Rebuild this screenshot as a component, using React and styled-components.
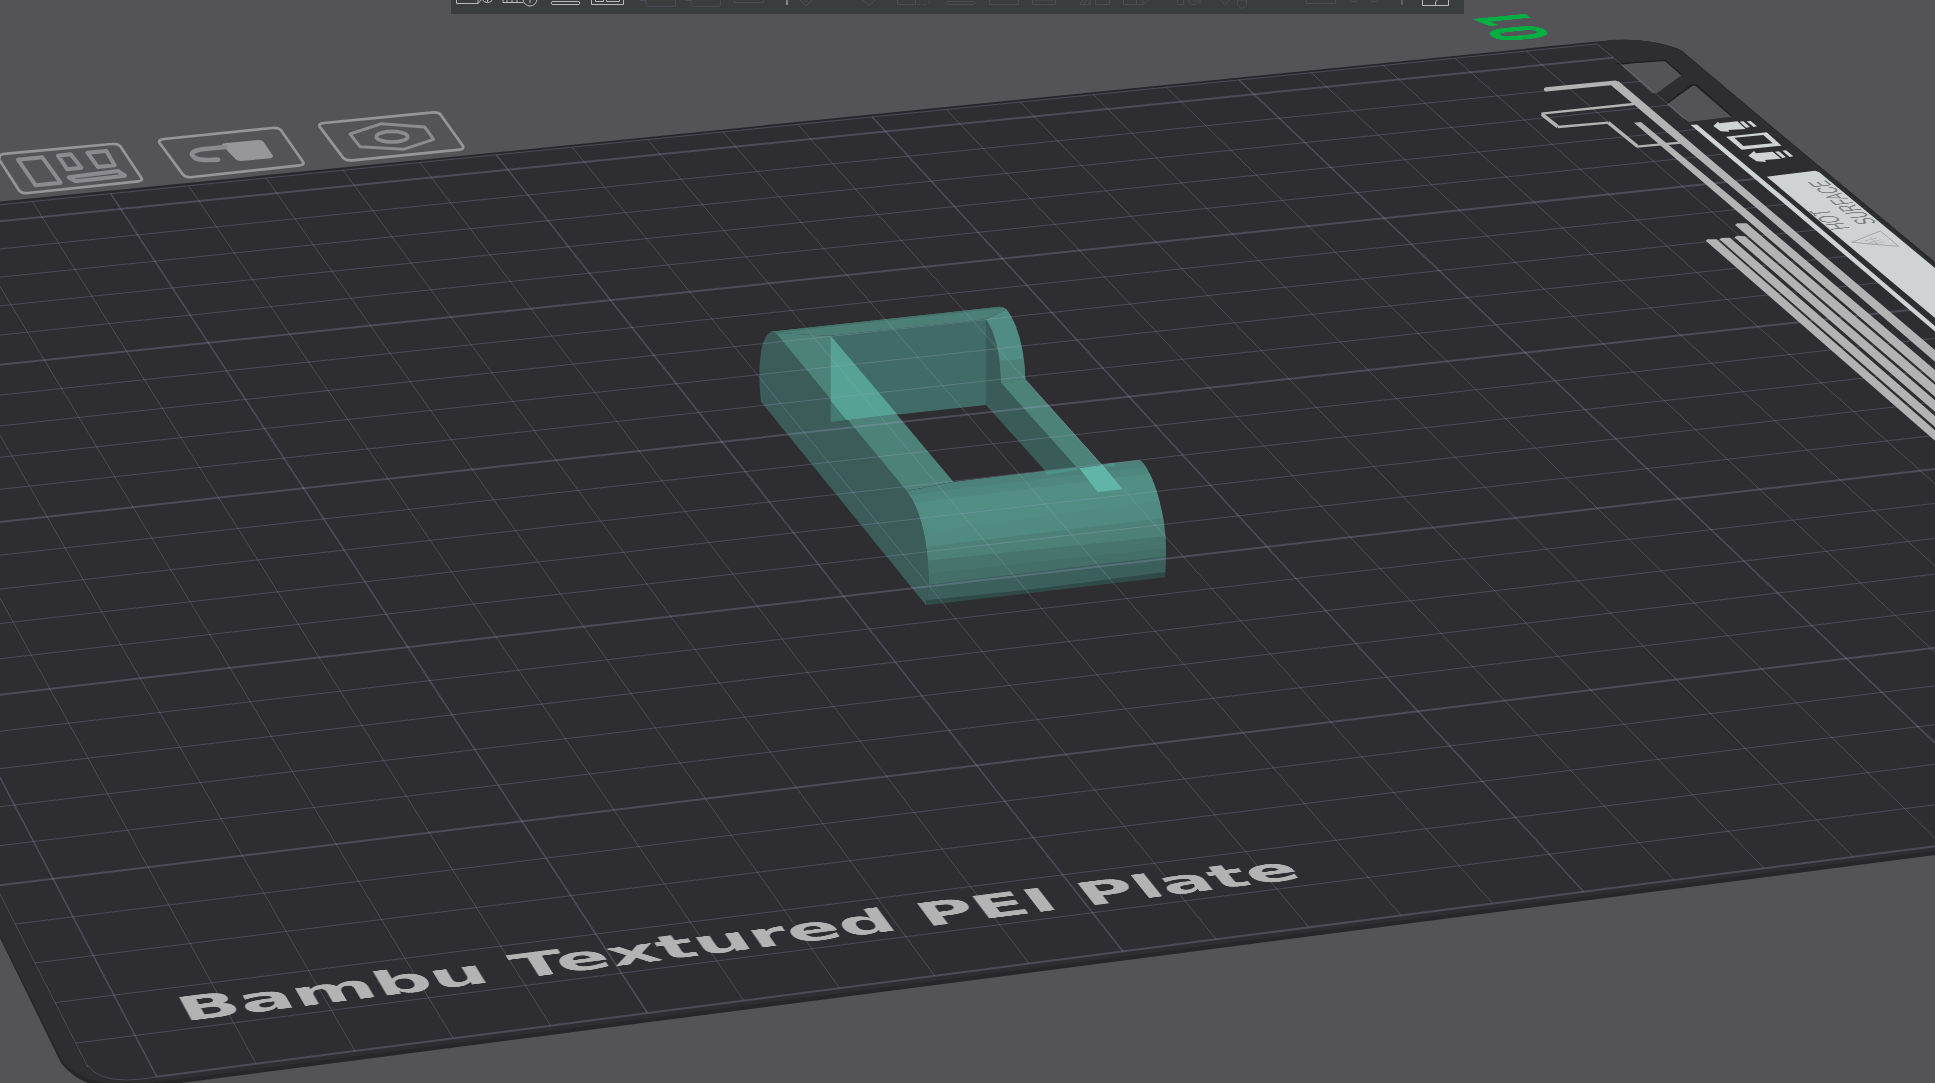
import React, { useEffect, useState } from "react";
import styled, { createGlobalStyle } from "styled-components";

const VIEW_W = 1935;
const VIEW_H = 1083;

/* ---------- camera ---------- */

// Known bed coordinates (in 10 mm cells) and where the camera puts them.
const ANCHORS = [
  [0, 0, 156.7, 1076.7],
  [15, 0, 1583.7, 891.7],
  [25, 25, 1613.5, 57.8],
  [5, 25, 120.7, 209],
];

function solve(rows) {
  const n = rows.length;
  for (let c = 0; c < n; c++) {
    let p = c;
    for (let r = c + 1; r < n; r++) if (Math.abs(rows[r][c]) > Math.abs(rows[p][c])) p = r;
    [rows[c], rows[p]] = [rows[p], rows[c]];
    for (let r = 0; r < n; r++) {
      if (r === c) continue;
      const f = rows[r][c] / rows[c][c];
      for (let k = c; k <= n; k++) rows[r][k] -= f * rows[c][k];
    }
  }
  return rows.map((row, i) => row[n] / row[i]);
}

function homography(points) {
  const rows = [];
  points.forEach(([u, v, x, y]) => {
    rows.push([u, v, 1, 0, 0, 0, -u * x, -v * x, x]);
    rows.push([0, 0, 0, u, v, 1, -u * y, -v * y, y]);
  });
  return solve(rows);
}

const H = homography(ANCHORS);

function project(u, v) {
  const w = H[6] * u + H[7] * v + 1;
  return [(H[0] * u + H[1] * v + H[2]) / w, (H[3] * u + H[4] * v + H[5]) / w];
}

// The lettering plane has 100 px per cell, with its y axis pointing to the front.
const CELL = 100;
const DEPTH = 28;
const P = homography(
  [[0, 0], [20, 0], [20, 20], [0, 20]].map(([u, v]) => [u * CELL, (DEPTH - v) * CELL, ...project(u, v)])
);
const PLANE_MATRIX = `matrix3d(${[
  P[0], P[3], 0, P[6],
  P[1], P[4], 0, P[7],
  0, 0, 1, 0,
  P[2], P[5], 0, 1,
].map((n) => n.toFixed(12)).join(",")})`;

/* ---------- styles ---------- */

const GlobalStyle = createGlobalStyle`
  * { box-sizing: border-box; }
  html, body, #root { height: 100%; }
  body { margin: 0; background: #545358; overflow: hidden; font-family: "Open Sans", sans-serif; }
`;

const Viewport = styled.main`
  position: relative;
  min-height: 100vh;
  overflow: hidden;
  background: #545358;
`;

const Scene = styled.svg`
  position: absolute;
  inset: 0;
  width: 100%;
  height: 100%;
  display: block;
`;

const Lettering = styled.div`
  position: absolute;
  top: 0;
  left: 0;
  width: 2700px;
  height: 2800px;
  transform-origin: 0 0;
  pointer-events: none;
`;

const PlateName = styled.h1`
  position: absolute;
  left: 54px;
  top: 2604px;
  margin: 0;
  font: 700 81px/100px "DejaVu Sans", sans-serif;
  color: #b3b3b3;
  white-space: nowrap;
`;

const Upright = styled.span`
  position: absolute;
  left: ${(p) => p.$x}px;
  top: ${(p) => p.$y}px;
  transform: translate(-50%, -50%) rotate(-90deg);
  white-space: nowrap;
`;

const PlateNumber = styled(Upright)`
  font: 900 106px/120px Roboto, sans-serif;
  color: #00ae42;
`;

const Warning = styled(Upright)`
  font: 400 36px/40px "Liberation Sans", sans-serif;
  color: #7d8183;
`;

const ToolbarRow = styled.header`
  position: relative;
  display: flex;
  justify-content: center;
  padding-right: 20px;
`;

const Toolbar = styled.div`
  display: flex;
  height: 14px;
  padding: 0 13px 0 7px;
  overflow: hidden;
  background: #3a3d3e;
`;

const Tool = styled.button`
  width: 32px;
  height: 14px;
  margin: 0 0 0 ${(p) => p.$gap}px;
  padding: 0;
  border: 0;
  background: none;
  color: ${(p) => (p.disabled ? "#4c4c54" : "#b9babd")};
`;

const ToolIcon = styled.svg`
  display: block;
  overflow: visible;
  fill: none;
  stroke: currentColor;
  stroke-width: 1;
`;

const Divider = styled.span`
  width: 2px;
  height: 5px;
  margin-left: ${(p) => p.$gap}px;
  background: ${(p) => (p.$bright ? "#85868a" : "#5e5f64")};
`;

/* ---------- toolbar ---------- */

const TOOLS = [
  { name: "Add", gap: 0, on: true, d: "M-1.5-4V3.5H20L24-1M20 3.5V-2M24-1A6 6 0 0 0 35-1M29.500-2V2" },
  { name: "Add plate", gap: 14, on: true, d: "M-1-4V2.500H19M3-1V2M8-1V2M13-1V2M-1-.5H18M19-1A7 7 0 0 0 33-1M26-3V3" },
  { name: "Auto orient", gap: 14, on: true, d: "M2 1.500H29Q31 3 29 4.500H2Q0 3 2 1.500Z" },
  { name: "Arrange", gap: 10, on: true, d: "M-.5-4V4.500H31.500V-4M3.500-4V1.500H11.500V-4M14.500-4V1.500H27.500V-4" },
  { name: "Copy", gap: 20, d: "M-4 .5H2V4Q2 6.500 5 6.500H29Q31.500 6.500 31.500 4V-3M2 .5V-3" },
  { name: "Paste", gap: 13, d: "M-4 .5H2V4Q2 6.500 5 6.500H29Q31.500 6.500 31.500 4V-3M2 .5V-3" },
  { name: "Delete", gap: 12, d: "M1.500-4V2.500H30.500V-4" },
  { divider: true, gap: 21, bright: true },
  { name: "Undo", gap: 2, d: "M10 0L16 6L22 0M13-1L16 2L19-1" },
  { name: "Redo", gap: 31, d: "M10 0L16 5.500L22 0" },
  { name: "Split", gap: 12, d: "M.5-4V4.500H18.500V-4M20 4.500h3m3 0h3m3-4v3" },
  { name: "Layers", gap: 15, d: "M3 1.500H30Q33 3 30 4.500H3Q0 3 3 1.500Z" },
  { name: "Move", gap: 12, d: "M1.500-4V4.500H30.500V-4" },
  { name: "Rotate", gap: 8, d: "M4.500-4V4.500H27.500V-4M4 0H27" },
  { name: "Cut", gap: 19, d: "M1 4.500H11L12-3M1 4L6-2M5 4L9-2M9 4L12 0M16.500-4V4.500H30.500V-4" },
  { name: "Mirror", gap: 10, d: "M2.500-4V4.500H23L28-1M15.500-3V4M22 4V-2" },
  { name: "Text", gap: 20, d: "M4.500-4V4.500H10.500V-4M16-2Q15 5 21 4.500Q27 4 26-2M21-2A2 2 0 1 0 24 0M27 4V-2" },
  { name: "Paint", gap: 13, d: "M2-1L7 4.500L13-1M19.500 0V3Q20 8 24 8Q28 8 28.500 3V0Z" },
  { name: "Measure", gap: 55, d: "M1.500-4V3.500H30.500V-4" },
  { name: "Assemble", gap: 12, d: "M1-1A5 5 0 0 0 10-1M3-2L8 3M21-1A5 5 0 0 0 30-1M22 3L28-2" },
  { divider: true, gap: 20 },
  { name: "Assembly view", gap: 16, on: true, d: "M3.500-4V5.500H29.500V-4M16.500 5V2L19-1" },
];

function MainToolbar() {
  return (
    <ToolbarRow>
      <Toolbar role="toolbar" aria-label="Main toolbar">
        {TOOLS.map((t, i) =>
          t.divider ? (
            <Divider key={i} $gap={t.gap} $bright={t.bright} />
          ) : (
            <Tool key={i} $gap={t.gap} disabled={!t.on} aria-label={t.name}>
              <ToolIcon width="32" height="14" viewBox="0 0 32 14" aria-hidden="true">
                <path d={t.d} />
              </ToolIcon>
            </Tool>
          )
        )}
      </Toolbar>
    </ToolbarRow>
  );
}

/* ---------- build plate ---------- */

const EDGE = 25.6;

function BedLine({ from, to, bold, row }) {
  const [x1, y1] = project(...from);
  const [x2, y2] = project(...to);
  return <line x1={x1} y1={y1} x2={x2} y2={y2} strokeWidth={bold ? (row ? 2 : 1.6) : 1} />;
}

function Grid() {
  const steps = Array.from({ length: 26 }, (_, i) => i);
  return (
    <g stroke="#b0acd4" strokeOpacity="0.24" fill="none">
      {steps.map((u) => (
        <BedLine key={`c${u}`} from={[u, 0]} to={[u, EDGE]} bold={u % 5 === 0 && u < 25} />
      ))}
      {steps.map((v) => (
        <BedLine key={`r${v}`} from={[v === 0 ? 0 : -0.6, v]} to={[25, v]} bold={v % 5 === 0} row />
      ))}
      <BedLine from={[-0.6, EDGE]} to={[25, EDGE]} />
      <BedLine from={[-0.6, 0.42]} to={[-0.6, EDGE]} />
      <path d="M87.500 1065Q97 1080 127 1080Q142 1079.500 157 1077" />
    </g>
  );
}

function Plate() {
  return (
    <g>
      <path
        fill="#27262a"
        d="M0 201.500L480 154L1597 41.500Q1650 36 1681 50L1800 150L1935 262V855L150 1087H100Q75 1081 61 1063L0 938Z"
      />
      <path
        fill="#2e2d31"
        d="M0 203L480 155.500L1597 43L1610 40Q1650 37 1680 50.500L1799 150L1935 264V851L150 1083H105Q77 1078 63 1062L0 936Z"
      />
      <g transform="translate(1600 30) scale(0.33333)">
        <path fill="#545358" d="M60 102L195 91L245 136L170 190L155 188ZM282 165L395 260L270 275L245 262L200 222Z" />
        <path
          fill="none"
          stroke="#1f1e21"
          strokeWidth="4"
          d="M50 100L62 102L110 97L195 91L245 134M200 221L275 165H290L395 258"
        />
      </g>
    </g>
  );
}

function PlateMarks() {
  return (
    <g>
      <g fill="#b3b3b3">
        <path d="M1610.700 85L1618.300 81L1758.300 200L1935 350V361.700L1747.300 200Z" />
        <path d="M1634 122.700L1641 122L1735 200L1935 370V382L1724 200Z" />
        <g transform="translate(1500 200) scale(0.33333)">
          <path d="M705 75L712 70H740L1305 554V590Z" />
          <path d="M703 112L712 107L735 109L1305 601V635Z" />
          <path d="M658 118L664 114L690 113L1305 648V681Z" />
          <path d="M617 122L622 118H650L1305 691V722Z" />
        </g>
      </g>
      <g transform="translate(1440 0) scale(0.33333)" fill="none" stroke="#b3b3b3" strokeLinejoin="round">
        <path strokeWidth="13" strokeLinecap="round" d="M318 268L526 248" />
        <path strokeWidth="7" d="M582 312L304 341" />
        <path strokeWidth="11" d="M306 343L353 380" />
        <path strokeWidth="7" d="M353 381L505 368M590 440L722 428" />
        <path strokeWidth="10" d="M505 368L592 439" />
      </g>
      <g fill="#cfd3d4">
        <path d="M1690.700 125L1697 124.500L1787.300 200L1935 326V331.500L1780 200Z" />
        <path d="M1766.700 176.700L1815 170.700L1819 172L1935 268V318Z" />
        <g transform="translate(1600 30) scale(0.33333)">
          <path d="M340 288L354 275L358 280L412 274L437 297L385 300L388 305L362 304Z" />
          <path d="M419 275L430 274L450 291L438 293ZM440 274L452 273L471 289L461 291Z" />
          <path fillRule="evenodd" d="M378 320L500 307L545 347L425 359ZM403 323L490 315L518 340L430 348Z" />
          <path d="M445 377L462 363L468 370L518 365L543 386L495 390L498 396L470 394Z" />
          <path d="M525 365L537 364L558 382L547 384ZM547 362L558 361L580 379L569 381Z" />
        </g>
      </g>
      <g transform="translate(1735 150) scale(0.33333)" fill="none" stroke="#9a9ea0" strokeWidth="2.500">
        <path d="M350 277L436 243L491 289Z" />
        <path strokeWidth="1.500" d="M390 272L425 264M398 280L440 268M410 284L448 274M405 262L430 284" />
      </g>
    </g>
  );
}

function PlateIcons() {
  return (
    <g
      transform="translate(0 90) scale(0.33333)"
      fill="none"
      stroke="#8c8b91"
      strokeWidth="12"
      strokeLinejoin="round"
      strokeLinecap="round"
    >
      <g strokeWidth="8" stroke="#96959a">
        <path d="M0 196Q4 192 20 191L335 162Q352 160 361 169L424 263Q430 272 414 274L84 309Q66 311 57 301L-3 208Z" />
        <path d="M492 147L815 114Q836 112 843 121L909 215Q915 224 899 226L578 261Q558 264 549 254L479 159Q472 150 492 147Z" />
        <path d="M972 99L1292 68Q1315 65 1322 74L1389 168Q1394 177 1379 179L1058 211Q1038 213 1029 203L959 110Q953 101 972 99Z" />
      </g>
      <path d="M54 209L127 202L182 278L107 286Z" />
      <path d="M174 197L212 193L244 233L202 238ZM262 188L319 183L344 226L294 231Z" />
      <path d="M206 262L354 243L375 257L227 274Z" />
      <path fill="#97969b" stroke="none" d="M665 164Q668 160 680 159L775 150Q787 150 791 156L819 197Q820 203 812 205L722 213Q711 213 707 208Z" />
      <path strokeWidth="14" d="M676 171L612 177Q560 184 583 202Q597 213 654 209" />
      <path strokeWidth="9" d="M1145 101L1274 111L1301 148L1210 178L1080 170L1050 132Z" />
      <ellipse cx="1176" cy="140" rx="47" ry="16" strokeWidth="11" />
    </g>
  );
}

/* ---------- model ---------- */

const FRONT_OUTLINE =
  "M500 603L640 575L1197 510Q1206 512 1215 526Q1250 580 1268 675Q1284 760 1275 862L558 946L566 885Q565 690 500 603Z";

const FRONT_BANDS = [
  { fill: "#4b8178", pts: "490,600 640,575 1197,508 1300,498 1300,530 500,625" },
  { fill: "#4e877d", pts: "490,618 640,598 1300,521 1300,565 490,646" },
  { fill: "#528e84", pts: "490,642 1300,542 1300,605 490,694" },
  { fill: "#518d83", pts: "490,690 1300,588 1300,635 490,740" },
  { fill: "#508a81", pts: "490,736 1300,627 1300,690 490,783" },
  { fill: "#4d8178", pts: "490,779 1300,681 1300,750 490,822" },
  { fill: "#47756e", pts: "490,819 1300,736 1300,800 490,864" },
  { fill: "#446f69", pts: "490,858 1300,772 1300,797 490,895" },
  { fill: "#3b5f5b", pts: "490,893 1300,796 1300,848 490,945" },
  { fill: "#304a48", pts: "558,931 900,895 1300,843 1300,870 550,950" },
];

function Model() {
  return (
    <g transform="translate(740 290) scale(0.33333)">
      <clipPath id="front">
        <path d={FRONT_OUTLINE} />
      </clipPath>
      <path fill="#3b5c59" d="M112 130L92 125Q72 135 63 185Q53 250 63 335L558 946L566 885Q565 690 500 603Z" />
      <polygon fill="#416b66" points="272,137 738,88 738,345 272,395" />
      <path fill="#4c7f76" d="M92 125L780 50Q792 50 800 58L738 88L272 137L112 130Z" />
      <path fill="#467269" d="M92 125L780 50L788 54L108 128Z" />
      <polygon fill="#4d8278" points="108,129 272,137 640,575 500,603" />
      <polygon fill="#56a294" points="272,138 471,372 318,390 272,333" />
      <polygon fill="#447a70" points="272,333 318,390 272,395" />
      <path fill="#3a5c59" d="M738 88L800 120L790 280L1022 535L1018 548L925 553L738 345Z" />
      <path fill="#508c83" d="M738 88L800 58Q852 130 856 268L784 279Q780 150 738 88Z" />
      <path fill="#4c8077" d="M779 212L851 207L856 268L784 279Z" />
      <polygon fill="#4d8278" points="784,279 856,268 1090,528 1022,545" />
      <g clipPath="url(#front)">
        {FRONT_BANDS.map((b) => (
          <polygon key={b.pts} fill={b.fill} points={b.pts} />
        ))}
      </g>
      <polygon fill="#4b9588" points="915,545 1010,534 1014,540 922,554" />
      <polygon fill="#4b9588" points="1090,530 1105,521 1125,519 1125,529" />
      <polygon fill="#60b5a8" points="1018,535 1088,525 1147,598 1073,606" />
    </g>
  );
}

/* ---------- page ---------- */

const coverScale = () => Math.max(window.innerWidth / VIEW_W, window.innerHeight / VIEW_H);

function useCoverScale() {
  const [scale, setScale] = useState(coverScale);
  useEffect(() => {
    const update = () => setScale(coverScale());
    window.addEventListener("resize", update);
    return () => window.removeEventListener("resize", update);
  }, []);
  return scale;
}

export default function App() {
  const scale = useCoverScale();
  return (
    <Viewport>
      <GlobalStyle />
      <Scene viewBox={`0 0 ${VIEW_W} ${VIEW_H}`} preserveAspectRatio="xMinYMin slice" aria-hidden="true">
        <Plate />
        <PlateIcons />
        <Model />
        <Grid />
        <PlateMarks />
      </Scene>
      <Lettering style={{ transform: `scale(${scale}) ${PLANE_MATRIX}` }}>
        <PlateName>Bambu Textured PEI Plate</PlateName>
        <PlateNumber $x={2418} $y={137}>01</PlateNumber>
        <Warning $x={2530} $y={970}>HOT</Warning>
        <Warning $x={2570} $y={915}>SURFACE</Warning>
      </Lettering>
      <MainToolbar />
    </Viewport>
  );
}
